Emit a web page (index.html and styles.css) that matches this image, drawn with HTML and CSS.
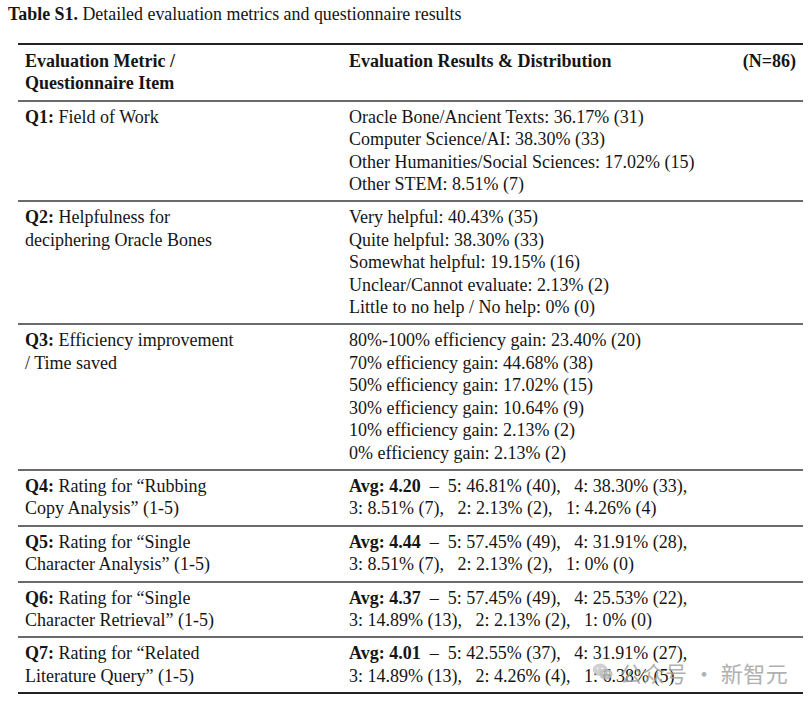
FILE: index.html
```html
<!DOCTYPE html>
<html>
<head>
<meta charset="utf-8">
<link rel="stylesheet" href="styles.css">
</head>
<body>
<div class="page">
  <p class="caption"><b>Table S1.</b> Detailed evaluation metrics and questionnaire results</p>
  <table class="tbl">
    <thead>
      <tr>
        <th class="c1">Evaluation Metric /<br>Questionnaire Item</th>
        <th class="c2"><div class="hdr"><span>Evaluation Results &amp; Distribution</span><span>(N=86)</span></div></th>
      </tr>
    </thead>
    <tbody>
      <tr>
        <td class="c1"><b>Q1:</b> Field of Work</td>
        <td class="c2">Oracle Bone/Ancient Texts: 36.17% (31)<br>Computer Science/AI: 38.30% (33)<br>Other Humanities/Social Sciences: 17.02% (15)<br>Other STEM: 8.51% (7)</td>
      </tr>
      <tr>
        <td class="c1"><b>Q2:</b> Helpfulness for<br>deciphering Oracle Bones</td>
        <td class="c2">Very helpful: 40.43% (35)<br>Quite helpful: 38.30% (33)<br>Somewhat helpful: 19.15% (16)<br>Unclear/Cannot evaluate: 2.13% (2)<br>Little to no help / No help: 0% (0)</td>
      </tr>
      <tr>
        <td class="c1"><b>Q3:</b> Efficiency improvement<br>/ Time saved</td>
        <td class="c2">80%-100% efficiency gain: 23.40% (20)<br>70% efficiency gain: 44.68% (38)<br>50% efficiency gain: 17.02% (15)<br>30% efficiency gain: 10.64% (9)<br>10% efficiency gain: 2.13% (2)<br>0% efficiency gain: 2.13% (2)</td>
      </tr>
      <tr>
        <td class="c1"><b>Q4:</b> Rating for “Rubbing<br>Copy Analysis” (1-5)</td>
        <td class="c2"><b>Avg: 4.20</b> &nbsp;– &nbsp;5: 46.81% (40), &nbsp;&nbsp;4: 38.30% (33),<br>3: 8.51% (7), &nbsp;&nbsp;2: 2.13% (2), &nbsp;&nbsp;1: 4.26% (4)</td>
      </tr>
      <tr>
        <td class="c1"><b>Q5:</b> Rating for “Single<br>Character Analysis” (1-5)</td>
        <td class="c2"><b>Avg: 4.44</b> &nbsp;– &nbsp;5: 57.45% (49), &nbsp;&nbsp;4: 31.91% (28),<br>3: 8.51% (7), &nbsp;&nbsp;2: 2.13% (2), &nbsp;&nbsp;1: 0% (0)</td>
      </tr>
      <tr>
        <td class="c1"><b>Q6:</b> Rating for “Single<br>Character Retrieval” (1-5)</td>
        <td class="c2"><b>Avg: 4.37</b> &nbsp;– &nbsp;5: 57.45% (49), &nbsp;&nbsp;4: 25.53% (22),<br>3: 14.89% (13), &nbsp;&nbsp;2: 2.13% (2), &nbsp;&nbsp;1: 0% (0)</td>
      </tr>
      <tr class="last">
        <td class="c1"><b>Q7:</b> Rating for “Related<br>Literature Query” (1-5)</td>
        <td class="c2"><b>Avg: 4.01</b> &nbsp;– &nbsp;5: 42.55% (37), &nbsp;&nbsp;4: 31.91% (27),<br>3: 14.89% (13), &nbsp;&nbsp;2: 4.26% (4), &nbsp;&nbsp;1: 6.38% (5)</td>
      </tr>
    </tbody>
  </table>
  <div class="watermark">
    <svg class="wm-icon" width="22" height="22" viewBox="0 0 30 26">
      <ellipse cx="11" cy="10" rx="10" ry="8.5" fill="#c8c8c8"/>
      <ellipse cx="19" cy="16" rx="9" ry="7.5" fill="#b8b8b8"/>
      <circle cx="7.5" cy="8" r="1.3" fill="#fff"/>
      <circle cx="14" cy="8" r="1.3" fill="#fff"/>
      <circle cx="16" cy="14.5" r="1.1" fill="#fff"/>
      <circle cx="22" cy="14.5" r="1.1" fill="#fff"/>
    </svg>
    <span class="wm-text">公众号 · 新智元</span>
  </div>
</div>
</body>
</html>
```

FILE: styles.css
```css
html, body {
  margin: 0;
  padding: 0;
  background: #fff;
}
.page {
  position: relative;
  width: 812px;
  height: 703px;
  font-family: "Liberation Serif", "Times New Roman", serif;
  color: #151515;
}
.caption {
  margin: 0;
  padding: 4px 0 0 8px;
  font-size: 17.9px;
  line-height: 20px;
}
.tbl {
  margin: 19px 0 0 18px;
  width: 785px;
  border-collapse: collapse;
  font-size: 18px;
  line-height: 22.4px;
}
.tbl th, .tbl td {
  text-align: left;
  vertical-align: top;
  padding: 4px 7px 5px 7px;
  border-bottom: 2px solid #6a6a6a;
}
.tbl thead th {
  border-top: 2px solid #222;
  font-weight: bold;
  padding-top: 5px;
}
.tbl .c1 {
  width: 310px;
}
.tbl tr.last td {
  border-bottom: 2px solid #222;
}
.hdr {
  display: flex;
  justify-content: space-between;
}
.watermark {
  position: absolute;
  left: 592px;
  top: 656px;
  display: flex;
  align-items: center;
  gap: 6px;
  opacity: 0.85;
}
.wm-text {
  font-family: "Noto Sans CJK SC", "Noto Sans", sans-serif;
  font-size: 22px;
  line-height: 32px;
  color: #a4a4a4;
  letter-spacing: 0.5px;
}
```
